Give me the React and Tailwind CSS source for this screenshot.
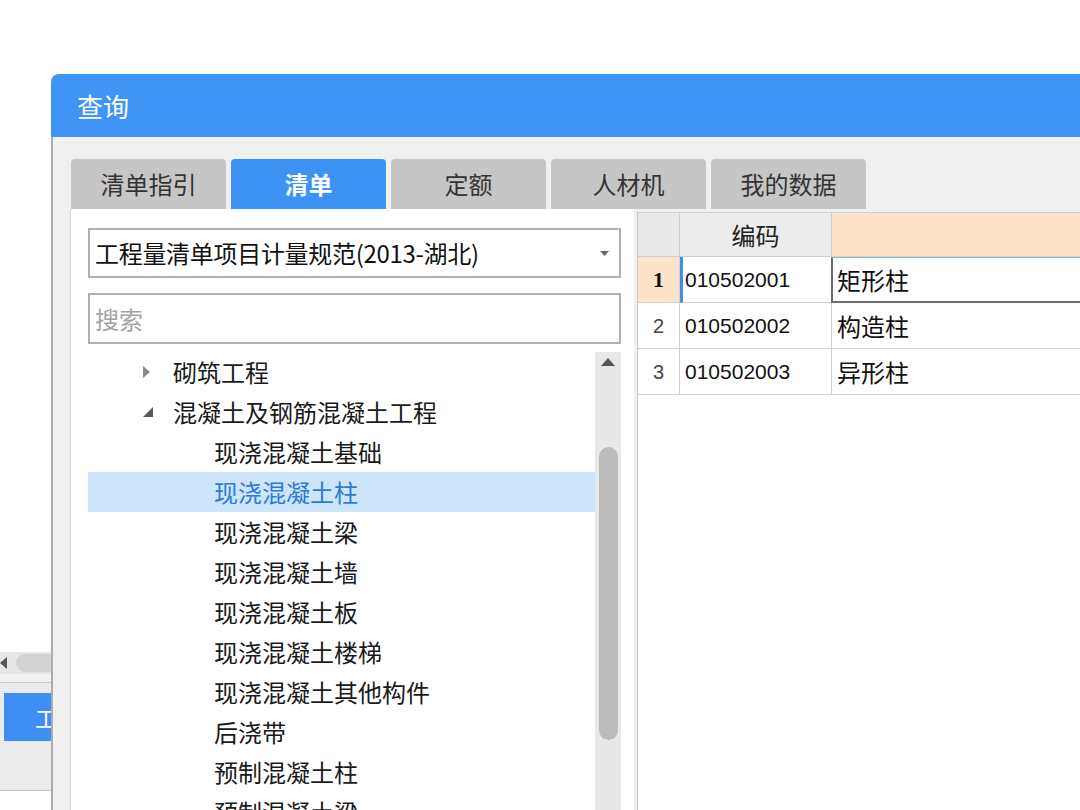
import React from "react";

const tabs = [
    { label: "清单指引" },
    { label: "清单", active: true },
    { label: "定额" },
    { label: "人材机" },
    { label: "我的数据" },
];

const tree = [
    { label: "砌筑工程", level: 1, arrow: "closed" },
    { label: "混凝土及钢筋混凝土工程", level: 1, arrow: "open" },
    { label: "现浇混凝土基础", level: 2 },
    { label: "现浇混凝土柱", level: 2, selected: true },
    { label: "现浇混凝土梁", level: 2 },
    { label: "现浇混凝土墙", level: 2 },
    { label: "现浇混凝土板", level: 2 },
    { label: "现浇混凝土楼梯", level: 2 },
    { label: "现浇混凝土其他构件", level: 2 },
    { label: "后浇带", level: 2 },
    { label: "预制混凝土柱", level: 2 },
    { label: "预制混凝土梁", level: 2 },
];

const rows = [
    { no: "1", code: "010502001", name: "矩形柱" },
    { no: "2", code: "010502002", name: "构造柱" },
    { no: "3", code: "010502003", name: "异形柱" },
];

const BackWindow = () => (
    <div className="w-[51px] shrink-0 flex flex-col">
        <div className="h-[578px] shrink-0" />
        {/* horizontal scrollbar */}
        <div className="h-[22px] shrink-0 bg-[#e6e6e6] flex items-center">
            <svg width="7" height="12" viewBox="0 0 7 12" className="shrink-0">
                <path d="M7 0 L0 6 L7 12 Z" fill="#555" />
            </svg>
            <div className="ml-[9px] h-[18px] flex-1 rounded-l-full bg-[#d2d2d2]" />
        </div>
        <div className="h-[8px] shrink-0 bg-[#f2f2f2]" />
        <div className="h-px shrink-0 bg-[#c6c6c6]" />
        <div className="h-[107px] shrink-0 bg-[#ececec] pt-[10px] pl-[4px]">
            <div className="h-[48px] bg-[#3d8ef5] overflow-hidden flex items-center pl-[31px] text-[22px] text-white whitespace-nowrap leading-none">
                工程
            </div>
        </div>
        <div className="h-px shrink-0 bg-[#c6c6c6]" />
    </div>
);

const Arrow = ({ type }) => type === "closed" ? (
    <svg width="8" height="12" viewBox="0 0 8 12">
        <path d="M0 0 L7 6 L0 12 Z" fill="#8a8a8a" />
    </svg>
) : (
    <svg width="10" height="10" viewBox="0 0 10 10">
        <path d="M10 0 L10 10 L0 10 Z" fill="#5a5a5a" />
    </svg>
);

const LeftPanel = () => (
    <div className="w-[564px] shrink-0 -ml-px border-l border-[#d6d6d6] bg-white pt-[19px] pl-[17px] pr-[13px] flex flex-col">
        {/* spec select */}
        <div className="h-[50px] border-2 border-[#b0b0b0] flex items-center pl-[5px] pr-[10px]">
            <span className="flex-1 text-[24px] leading-none text-[#111] tracking-[-0.3px]">工程量清单项目计量规范(2013-湖北)</span>
            <svg width="9" height="5" viewBox="0 0 9 5">
                <path d="M0 0 L9 0 L4.5 5 Z" fill="#666" />
            </svg>
        </div>
        {/* search */}
        <div className="mt-[15px] h-[51px] border-2 border-[#b0b0b0] flex items-center pl-[5px]">
            <span className="text-[24px] leading-none text-[#a3a3a3]">搜索</span>
        </div>
        {/* tree */}
        <div className="mt-[8px] flex flex-1 min-h-0">
            <div className="flex-1 flex flex-col">
                {tree.map((t) => (
                    <div
                        key={t.label}
                        className={`h-[40px] shrink-0 flex items-center text-[24px] leading-none whitespace-nowrap ${t.selected ? "bg-[#cce5fa] text-[#2f7bd2]" : "text-[#1a1a1a]"} ${t.level === 1 ? "pl-[55px]" : "pl-[126px]"}`}
                    >
                        {t.level === 1 && (
                            <span className="w-[30px] flex items-center">
                                <Arrow type={t.arrow} />
                            </span>
                        )}
                        {t.label}
                    </div>
                ))}
            </div>
            {/* vertical scrollbar */}
            <div className="w-[26px] shrink-0 bg-[#e8e8e8] flex flex-col items-center pt-[6px]">
                <svg width="14" height="8" viewBox="0 0 14 8">
                    <path d="M0 8 L7 0 L14 8 Z" fill="#555" />
                </svg>
                <div className="mt-[81px] w-[19px] h-[293px] rounded-full bg-[#bcbcbc]" />
            </div>
        </div>
    </div>
);

const Grid = () => (
    <div className="ml-[3px] mt-[3px] flex-1 bg-white border-l border-[#c8c8c8]">
        <div className="grid grid-cols-[42px_152px_1fr] font-['Liberation_Sans',sans-serif]">
            {/* header */}
            <div className="h-[45px] bg-[#e9e9e9] border-t border-r border-b border-[#cfcfcf]" />
            <div className="h-[45px] bg-[#ececec] border-t border-r border-b border-[#cfcfcf] flex items-center justify-center text-[24px] leading-none text-[#222] font-['Noto_Sans_CJK_SC',sans-serif]">
                编码
            </div>
            <div className="h-[45px] bg-[#fde4c9] border-t border-b border-[#cfcfcf]" />
            {rows.map((r, i) => {
                const first = i === 0;
                return (
                    <React.Fragment key={r.no}>
                        <div
                            className={`h-[46px] border-r border-b border-[#d2d2d2] flex items-center justify-center leading-none ${first ? "bg-[#fde4c9] font-['Liberation_Serif',serif] font-bold text-[22px] text-[#111]" : "text-[20px] text-[#444]"}`}
                        >
                            {r.no}
                        </div>
                        <div
                            className={`h-[46px] border-r border-b border-[#d2d2d2] flex items-center text-[21px] leading-none text-[#111] ${first ? "border-l-[3px] border-l-[#3c8ef0] pl-[2px]" : "pl-[5px]"}`}
                        >
                            {r.code}
                        </div>
                        <div
                            className={`h-[46px] flex items-center text-[24px] leading-none text-[#111] font-['Noto_Sans_CJK_SC',sans-serif] ${first ? "-ml-px border-l-2 border-b-2 border-t border-[#6e6e6e] border-t-[#9ab6d6] pl-[4px]" : "border-b border-[#d2d2d2] pl-[5px]"}`}
                        >
                            {r.name}
                        </div>
                    </React.Fragment>
                );
            })}
        </div>
    </div>
);

const Dialog = () => (
    <div className="w-[1060px] shrink-0 flex flex-col rounded-tl-[8px] overflow-hidden">
        {/* title bar */}
        <div className="h-[63px] shrink-0 bg-[#3f95f5] flex items-center pl-[26px]">
            <span className="text-[26px] leading-none text-white">查询</span>
        </div>
        {/* body */}
        <div className="flex-1 min-h-0 border-l-2 border-[#acacac] bg-[#f0f0f0] pt-[22px] pl-[18px] flex flex-col">
            <div className="h-[50px] shrink-0 flex gap-[5px]">
                {tabs.map((t) => (
                    <div
                        key={t.label}
                        className={`w-[155px] rounded-t-[4px] flex items-center justify-center text-[24px] leading-none ${t.active ? "bg-[#3d93f4] text-white font-bold" : "bg-[#c6c6c6] text-[#333]"}`}
                    >
                        {t.label}
                    </div>
                ))}
            </div>
            <div className="flex-1 min-h-0 flex">
                <LeftPanel />
                <Grid />
            </div>
        </div>
    </div>
);

const App = () => {
    return (
        <div className="w-[1080px] h-[810px] overflow-hidden bg-white flex pt-[74px] font-['Noto_Sans_CJK_SC','Noto_Sans',sans-serif]">
            <BackWindow />
            <Dialog />
        </div>
    );
};

export default App;
